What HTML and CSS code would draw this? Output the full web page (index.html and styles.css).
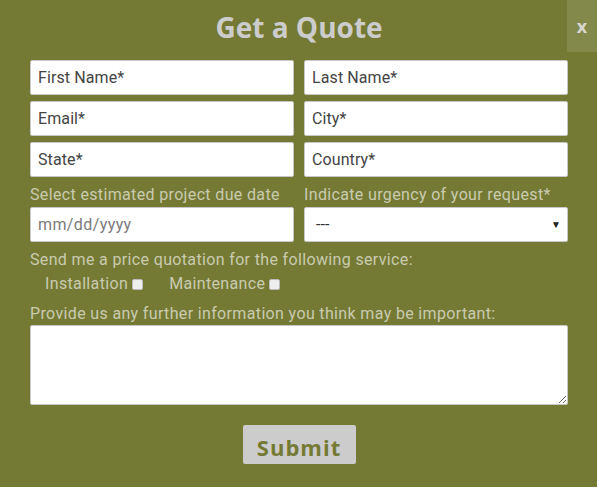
FILE: index.html
```html
<!DOCTYPE html>
<html>
<head>
<meta charset="utf-8">
<link rel="stylesheet" href="styles.css">
</head>
<body>
<div class="modal">
  <div class="close">x</div>
  <h1 class="title">Get a Quote</h1>
  <form class="form">
    <div class="grid">
      <input class="field" type="text" placeholder="First Name*">
      <input class="field" type="text" placeholder="Last Name*">
      <input class="field" type="text" placeholder="Email*">
      <input class="field" type="text" placeholder="City*">
      <input class="field" type="text" placeholder="State*">
      <input class="field" type="text" placeholder="Country*">
      <div class="group">
        <label class="label">Select estimated project due date</label>
        <div class="field date">mm/dd/yyyy</div>
      </div>
      <div class="group">
        <label class="label">Indicate urgency of your request*</label>
        <div class="field select"><span>---</span><span class="caret">▼</span></div>
      </div>
    </div>
    <p class="label services-label">Send me a price quotation for the following service:</p>
    <div class="checks">
      <label class="check">Installation<span class="box"></span></label>
      <label class="check">Maintenance<span class="box"></span></label>
    </div>
    <p class="label info-label">Provide us any further information you think may be important:</p>
    <textarea class="textarea"></textarea>
    <div class="actions"><button class="submit" type="button">Submit</button></div>
  </form>
</div>
</body>
</html>
```
FILE: styles.css
```css
html, body { margin: 0; padding: 0; background: #fff; }
.modal {
  position: relative;
  width: 597px;
  height: 487px;
  background: #747a33;
  box-sizing: border-box;
  padding: 0 29px 0 30px;
  font-family: Roboto, "Liberation Sans", sans-serif;
}
.close {
  position: absolute;
  top: 0;
  right: 0;
  width: 30px;
  height: 52px;
  background: #83894b;
  color: #d8d8d0;
  font-family: "Open Sans", sans-serif;
  font-weight: 700;
  font-size: 18px;
  line-height: 52px;
  text-align: center;
}
.title {
  margin: 0;
  height: 55px;
  line-height: 55px;
  text-align: center;
  font-family: "Open Sans", sans-serif;
  font-weight: 700;
  font-size: 28px;
  color: #cccccc;
}
.form { margin: 0; padding-top: 5px; }
.grid {
  display: grid;
  grid-template-columns: 264px 264px;
  column-gap: 10px;
  row-gap: 6px;
}
.field {
  box-sizing: border-box;
  height: 35px;
  width: 100%;
  margin: 0;
  border: 1px solid #c8c8c8;
  border-radius: 2px;
  background: #fff;
  padding: 0 7px;
  font-family: Roboto, "Liberation Sans", sans-serif;
  font-size: 16px;
  letter-spacing: 0.1px;
  color: #333;
  outline: none;
}
.field::placeholder { color: #444; opacity: 1; }
.group { display: flex; flex-direction: column; }
.label {
  color: #c9cbb0;
  font-size: 16px;
  letter-spacing: 0.35px;
  line-height: 20px;
  margin: 0;
}
.group .label { margin-top: 2px; margin-bottom: 2px; }
.date { display: flex; align-items: center; color: #7a7a7a; letter-spacing: 0.4px; }
.select { display: flex; align-items: center; justify-content: space-between; padding-left: 11px; color: #333; }
.caret { font-size: 10px; color: #222; margin-right: -1px; }
.services-label { margin-top: 8px; }
.checks { display: flex; gap: 26px; padding-left: 15px; margin-top: 4px; }
.check { display: flex; align-items: center; color: #c9cbb0; font-size: 16px; letter-spacing: 0.35px; line-height: 20px; }
.box {
  display: inline-block;
  width: 11px;
  height: 11px;
  margin-left: 4px;
  background: #eeeeee;
  border: 1px solid #bbb;
  border-radius: 2px;
  box-sizing: border-box;
}
.info-label { margin-top: 10px; margin-bottom: 1px; }
.textarea {
  display: block;
  box-sizing: border-box;
  width: 538px;
  height: 80px;
  margin: 0;
  border: 1px solid #c8c8c8;
  border-radius: 2px;
  background: #fff;
  resize: vertical;
}
.actions { display: flex; justify-content: center; padding-top: 20px; }
.submit {
  width: 113px;
  height: 39px;
  border: none;
  border-radius: 2px;
  background: #cccccc;
  color: #747a33;
  font-family: "Open Sans", sans-serif;
  font-weight: 700;
  font-size: 22px;
  letter-spacing: 1px;
  padding: 4px 0 0;
}
```
